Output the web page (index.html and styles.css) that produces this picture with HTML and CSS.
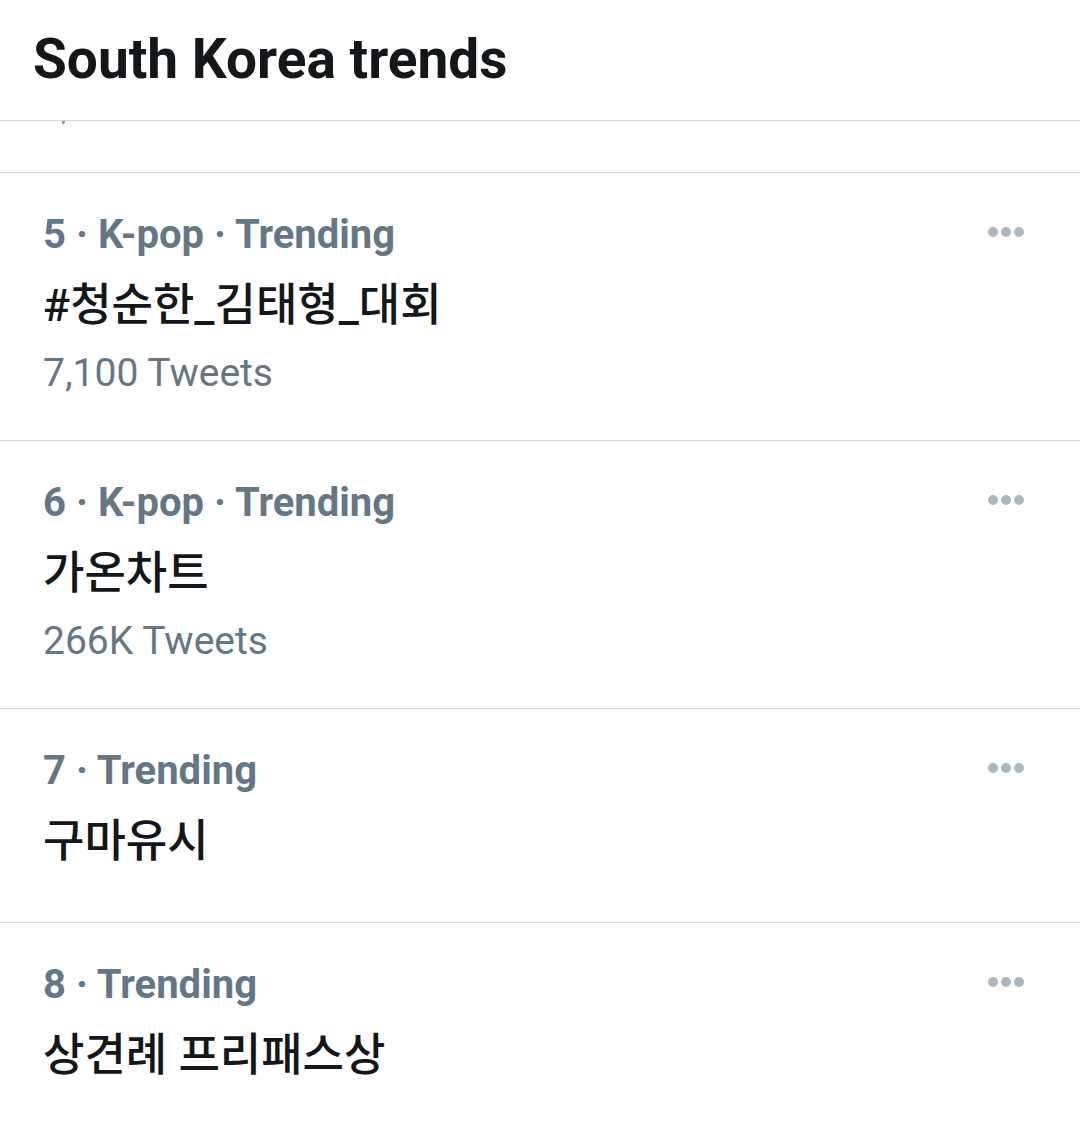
FILE: index.html
```html
<!DOCTYPE html>
<html lang="ko">
<head>
<meta charset="utf-8">
<title>South Korea trends</title>
<link rel="stylesheet" href="styles.css">
</head>
<body>
<div class="page">
  <header class="header">
    <h1 class="header-title">South Korea trends</h1>
  </header>
  <div class="partial">
    <span class="partial-mark"></span>
  </div>
  <ul class="trends">
    <li class="trend">
      <div class="trend-text">
        <div class="meta">5 · K-pop · Trending</div>
        <div class="name">#청순한_김태형_대회</div>
        <div class="count">7,100 Tweets</div>
      </div>
      <svg class="more" width="36" height="10" viewBox="0 0 36 10"><circle cx="5" cy="5" r="5"/><circle cx="18" cy="5" r="5"/><circle cx="31" cy="5" r="5"/></svg>
    </li>
    <li class="trend">
      <div class="trend-text">
        <div class="meta">6 · K-pop · Trending</div>
        <div class="name">가온차트</div>
        <div class="count">266K Tweets</div>
      </div>
      <svg class="more" width="36" height="10" viewBox="0 0 36 10"><circle cx="5" cy="5" r="5"/><circle cx="18" cy="5" r="5"/><circle cx="31" cy="5" r="5"/></svg>
    </li>
    <li class="trend">
      <div class="trend-text">
        <div class="meta">7 · Trending</div>
        <div class="name">구마유시</div>
      </div>
      <svg class="more" width="36" height="10" viewBox="0 0 36 10"><circle cx="5" cy="5" r="5"/><circle cx="18" cy="5" r="5"/><circle cx="31" cy="5" r="5"/></svg>
    </li>
    <li class="trend">
      <div class="trend-text">
        <div class="meta">8 · Trending</div>
        <div class="name">상견례 프리패스상</div>
      </div>
      <svg class="more" width="36" height="10" viewBox="0 0 36 10"><circle cx="5" cy="5" r="5"/><circle cx="18" cy="5" r="5"/><circle cx="31" cy="5" r="5"/></svg>
    </li>
  </ul>
</div>
</body>
</html>
```
FILE: styles.css
```css
html, body {
  margin: 0;
  padding: 0;
  background: #ffffff;
}
body {
  font-family: Roboto, "Noto Sans CJK KR", "Noto Sans", sans-serif;
  color: #14171a;
  width: 1080px;
  height: 1125px;
  overflow: hidden;
}
.page {
  width: 1080px;
}
.header {
  padding: 25px 33px 27px;
  border-bottom: 1px solid #ccd6dd;
  background: #ffffff;
}
.header-title {
  margin: 0;
  font-size: 55px;
  line-height: 68px;
  font-weight: 700;
  color: #14171a;
}
.partial {
  height: 51px;
  border-bottom: 1px solid #ccd6dd;
  padding-left: 62px;
}
.partial-mark {
  display: block;
  width: 3px;
  height: 3px;
  border-radius: 0 0 2px 1px;
  background: #8a99a6;
}
.trends {
  list-style: none;
  margin: 0;
  padding: 0;
}
.trend {
  display: flex;
  justify-content: space-between;
  align-items: flex-start;
  padding: 32px 56px 40px 43px;
  border-bottom: 1px solid #ccd6dd;
}
.trend-text {
  display: flex;
  flex-direction: column;
}
.meta {
  font-size: 40px;
  line-height: 60px;
  font-weight: 700;
  color: #657786;
}
.name {
  font-size: 45px;
  line-height: 81px;
  font-weight: 500;
  color: #14171a;
}
.count {
  font-size: 39px;
  line-height: 54px;
  font-weight: 400;
  color: #657786;
}
.more {
  margin-top: 22px;
  fill: #aab8c2;
  flex-shrink: 0;
}
```
